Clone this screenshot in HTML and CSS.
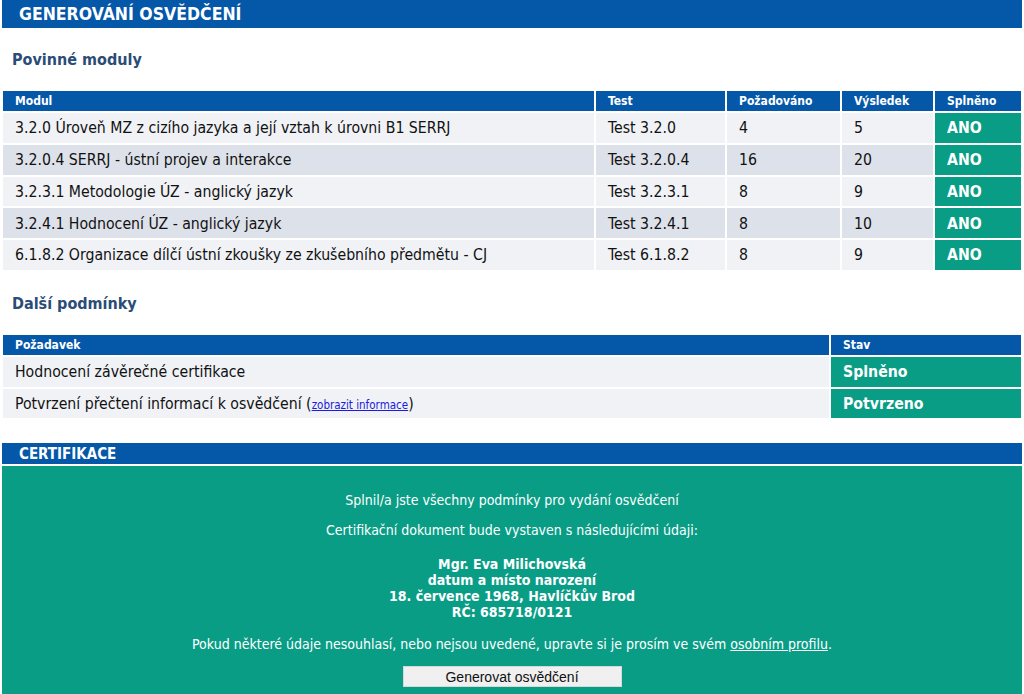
FILE: index.html
```html
<!DOCTYPE html>
<html lang="cs">
<head>
<meta charset="utf-8">
<title>Generování osvědčení</title>
<link rel="stylesheet" href="styles.css">
</head>
<body>
<div class="page">
  <div class="bar"><h1>GENEROVÁNÍ OSVĚDČENÍ</h1></div>

  <h2 class="sub">Povinné moduly</h2>
  <table class="grid">
    <thead>
      <tr>
        <th class="c-mod">Modul</th>
        <th class="c-test">Test</th>
        <th class="c-req">Požadováno</th>
        <th class="c-res">Výsledek</th>
        <th class="c-ok">Splněno</th>
      </tr>
    </thead>
    <tbody>
      <tr class="odd"><td>3.2.0 Úroveň MZ z cizího jazyka a její vztah k úrovni B1 SERRJ</td><td>Test 3.2.0</td><td>4</td><td>5</td><td class="ok">ANO</td></tr>
      <tr class="even"><td>3.2.0.4 SERRJ - ústní projev a interakce</td><td>Test 3.2.0.4</td><td>16</td><td>20</td><td class="ok">ANO</td></tr>
      <tr class="odd"><td>3.2.3.1 Metodologie ÚZ - anglický jazyk</td><td>Test 3.2.3.1</td><td>8</td><td>9</td><td class="ok">ANO</td></tr>
      <tr class="even"><td>3.2.4.1 Hodnocení ÚZ - anglický jazyk</td><td>Test 3.2.4.1</td><td>8</td><td>10</td><td class="ok">ANO</td></tr>
      <tr class="odd"><td>6.1.8.2 Organizace dílčí ústní zkoušky ze zkušebního předmětu - CJ</td><td>Test 6.1.8.2</td><td>8</td><td>9</td><td class="ok">ANO</td></tr>
    </tbody>
  </table>

  <h2 class="sub">Další podmínky</h2>
  <table class="grid">
    <thead>
      <tr>
        <th>Požadavek</th>
        <th class="c-stav">Stav</th>
      </tr>
    </thead>
    <tbody>
      <tr class="odd"><td>Hodnocení závěrečné certifikace</td><td class="ok">Splněno</td></tr>
      <tr class="odd"><td>Potvrzení přečtení informací k osvědčení (<a href="#" class="small-link">zobrazit informace</a>)</td><td class="ok">Potvrzeno</td></tr>
    </tbody>
  </table>

  <div class="bar bar-cert"><h1>CERTIFIKACE</h1></div>
  <div class="cert">
    <p class="l1">Splnil/a jste všechny podmínky pro vydání osvědčení</p>
    <p class="l2">Certifikační dokument bude vystaven s následujícími údaji:</p>
    <p class="person">Mgr. Eva Milichovská<br>datum a místo narození<br>18. července 1968, Havlíčkův Brod<br>RČ: 685718/0121</p>
    <p class="l3">Pokud některé údaje nesouhlasí, nebo nejsou uvedené, upravte si je prosím ve svém <a href="#" class="profile">osobním profilu</a>.</p>
    <button class="gen" type="button">Generovat osvědčení</button>
  </div>
</div>
</body>
</html>
```

FILE: styles.css
```css
html, body {
  margin: 0;
  padding: 0;
  background: #ffffff;
}
body {
  font-family: "DejaVu Sans Condensed", "DejaVu Sans", sans-serif;
  color: #111;
  overflow: hidden;
}
.page {
  padding: 0 1px;
}
.bar {
  background: #0557a8;
  height: 28px;
  margin: 0 1px;
  display: flex;
  align-items: center;
}
.bar h1 {
  margin: 0 0 0 17px;
  font-size: 17.5px;
  font-weight: bold;
  color: #fff;
}
.sub {
  margin: 0;
  padding: 22px 0 0 11px;
  height: 61px;
  box-sizing: border-box;
  font-size: 16px;
  font-weight: bold;
  color: #2b4c76;
}
.grid {
  width: 100%;
  border-collapse: separate;
  border-spacing: 2px;
}
.grid th {
  background: #0557a8;
  color: #fff;
  font-size: 12px;
  font-weight: bold;
  text-align: left;
  height: 20px;
  padding: 0 0 0 12px;
}
.grid td {
  font-size: 15.7px;
  height: 29.75px;
  padding: 0 0 0 12px;
  text-align: left;
}
.grid tr.odd td { background: #f0f2f6; }
.grid tr.even td { background: #dde1ea; }
.grid td.ok, .grid tr.odd td.ok, .grid tr.even td.ok {
  background: #0a9d86;
  color: #fff;
  font-weight: bold;
}
.c-test { width: 117px; }
.c-req { width: 101px; }
.c-res { width: 79px; }
.c-ok { width: 74px; }
.c-stav { width: 178px; }
.small-link {
  font-size: 11.5px;
  color: #1a1ae0;
}
.bar-cert {
  height: 21px;
  margin-top: 23px;
}
.bar-cert h1 {
  font-size: 15px;
}
.cert {
  background: #0a9d86;
  margin: 2px 1px 0;
  padding: 26px 0 8px;
  text-align: center;
  color: #fff;
  font-size: 14px;
}
.cert p {
  margin: 0;
  line-height: 16px;
}
.cert .l1 { margin-bottom: 14px; }
.cert .l2 { margin-bottom: 18px; }
.cert .person {
  font-weight: bold;
  margin-bottom: 16px;
}
.cert .l3 { margin-bottom: 14px; }
.cert .profile {
  color: #fff;
}
.gen {
  display: block;
  margin: 0 auto;
  font-family: "Liberation Sans", Arial, sans-serif;
  font-size: 14px;
  color: #111;
  background: #f0f0f0;
  border: 1px solid #d8d8d8;
  width: 219px;
  height: 21px;
  padding: 0;
}
```
